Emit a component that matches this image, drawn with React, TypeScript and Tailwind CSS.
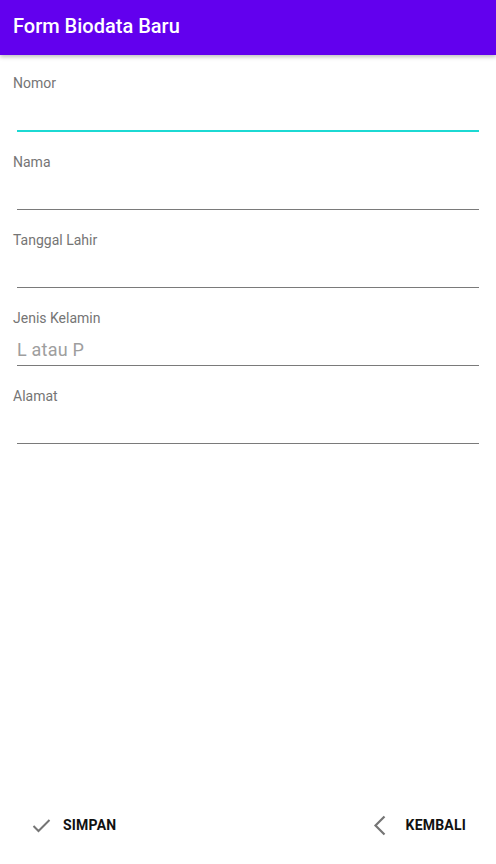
import React from 'react';

type FieldProps = {
    label: string;
    placeholder?: string;
    focused?: boolean;
}

const Field = ({ label, placeholder, focused }: FieldProps) => {
    return (
        <div className="flex flex-col mb-[22px]">
            <div className="pl-[13px] text-[14px] leading-[16px] text-[#757575]">{label}</div>
            <div className="pl-[17px] pr-[17px]">
                <div
                    className={
                        focused
                            ? 'h-[41px] border-b-2 border-[#1cd9d3] flex items-end pb-[4px]'
                            : 'h-[40px] border-b border-[#7a7a7a] flex items-end pb-[4px]'
                    }
                >
                    {placeholder && (
                        <span className="text-[18px] leading-[22px] text-[#9e9e9e] tracking-[0.2px]">{placeholder}</span>
                    )}
                </div>
            </div>
        </div>
    );
};

const App = () => {
    return (
        <div className="w-[496px] h-[864px] bg-white flex flex-col font-['Roboto',sans-serif]">
            {/* App bar */}
            <div className="h-[55px] bg-[#6200ee] flex items-center pl-[13px] pb-[3px] shadow-[0_2px_4px_rgba(0,0,0,0.25)] relative z-10">
                <span className="text-white text-[20px] leading-[24px] font-medium">Form Biodata Baru</span>
            </div>

            {/* Form */}
            <div className="flex flex-col pt-[20px] flex-1">
                <Field label="Nomor" focused />
                <Field label="Nama" />
                <Field label="Tanggal Lahir" />
                <Field label="Jenis Kelamin" placeholder="L atau P" />
                <Field label="Alamat" />
            </div>

            {/* Bottom actions */}
            <div className="h-[80px] flex items-start justify-between pt-[31px]">
                <button className="flex items-center h-[20px] pl-[32px] gap-[12px]">
                    <svg width="19" height="15" viewBox="0 0 19 15" fill="none">
                        <path d="M1.5 8 L6.5 13 L17.5 2" stroke="#757575" strokeWidth="2" />
                    </svg>
                    <span className="text-[14px] font-bold text-[#111] tracking-[0.2px]">SIMPAN</span>
                </button>
                <button className="flex items-center h-[20px] pr-[30px] gap-[20px]">
                    <svg width="13" height="21" viewBox="0 0 13 21" fill="none">
                        <path d="M11.5 1.5 L2.5 10.5 L11.5 19.5" stroke="#757575" strokeWidth="2.2" />
                    </svg>
                    <span className="text-[14px] font-bold text-[#111] tracking-[0.2px]">KEMBALI</span>
                </button>
            </div>
        </div>
    );
};

export default App;
